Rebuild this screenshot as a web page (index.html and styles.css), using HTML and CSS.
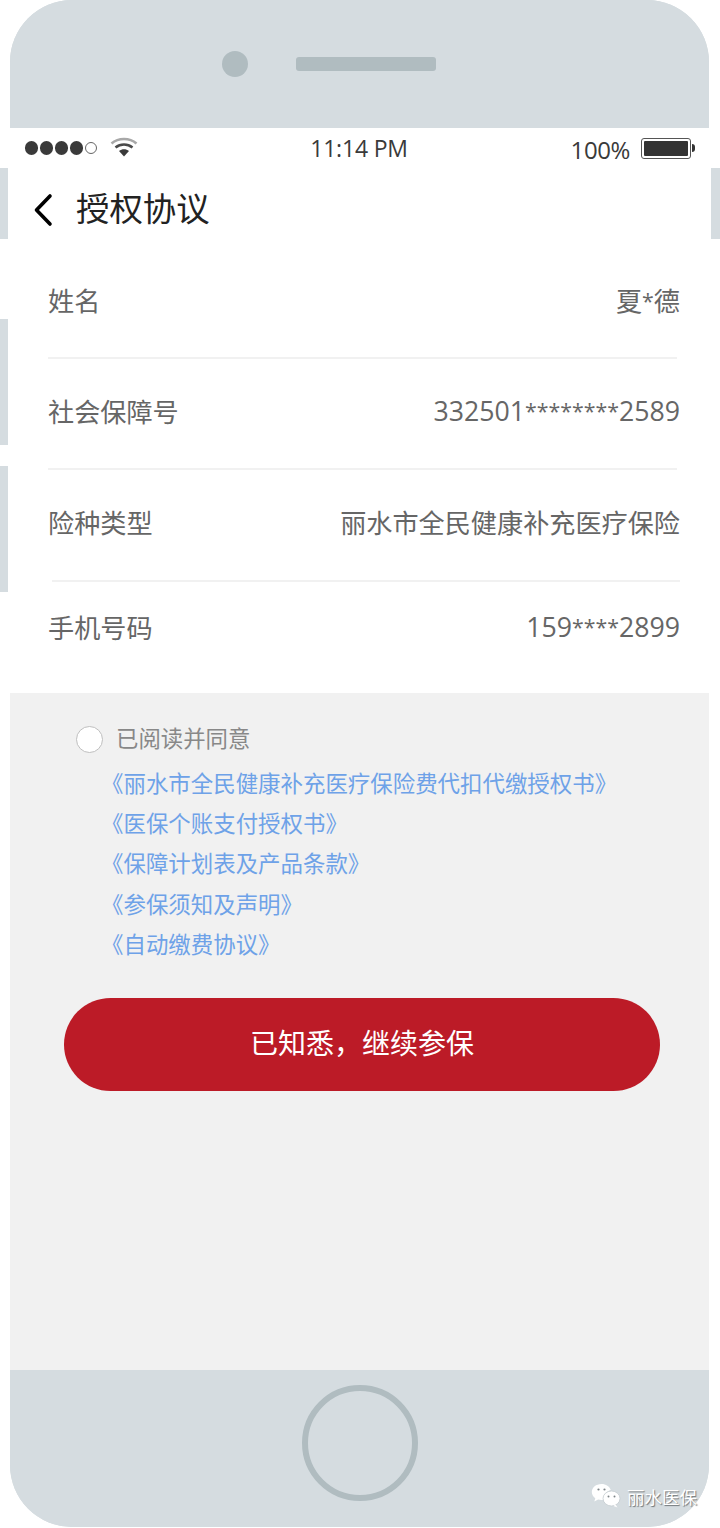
FILE: index.html
```html
<!DOCTYPE html>
<html lang="zh-CN">
<head>
<meta charset="utf-8">
<title>授权协议</title>
<link rel="stylesheet" href="styles.css">
</head>
<body>
<div class="stage">
  <span class="side side-l1"></span>
  <span class="side side-l2"></span>
  <span class="side side-l3"></span>
  <span class="side side-r1"></span>
  <div class="phone">
    <div class="bezel-top">
      <span class="camera"></span>
      <span class="speaker"></span>
    </div>
    <div class="screen">
      <div class="statusbar">
        <div class="status-left">
          <span class="dot"></span><span class="dot"></span><span class="dot"></span><span class="dot"></span><span class="dot dot-empty"></span>
          <svg class="wifi" width="28" height="20" viewBox="0 0 28 20"><path d="M1.5 6.5C8.5 0.5 19.5 0.5 26.5 6.5" fill="none" stroke="#a8a8a8" stroke-width="2.6"/><path d="M5.5 10.5C10.5 6.5 17.5 6.5 22.5 10.5" fill="none" stroke="#4a4a4a" stroke-width="2.6"/><path d="M9 14C12 11.5 16 11.5 19 14L14 19.5Z" fill="#3a3a3a"/></svg>
        </div>
        <div class="status-time">11:14 PM</div>
        <div class="status-right">
          <span class="percent">100%</span>
          <span class="battery"><span class="battery-fill"></span></span>
          <span class="battery-tip"></span>
        </div>
      </div>
      <div class="navbar">
        <svg class="back" width="22" height="34" viewBox="0 0 22 34"><path d="M18 3L4.500 17L18 31" fill="none" stroke="#000" stroke-width="3.600" stroke-linecap="round" stroke-linejoin="round"/></svg>
        <span class="nav-title">授权协议</span>
      </div>
      <div class="info">
        <div class="row row-1"><span>姓名</span><span>夏<span class="mask">*</span>德</span></div>
        <div class="row row-2"><span>社会保障号</span><span class="num">332501<span class="mask">********</span>2589</span></div>
        <div class="row row-3"><span>险种类型</span><span>丽水市全民健康补充医疗保险</span></div>
        <div class="row row-4"><span>手机号码</span><span class="num">159<span class="mask">****</span>2899</span></div>
      </div>
      <div class="agreement">
        <div class="agree-line">
          <span class="radio"></span>
          <span class="agree-text">已阅读并同意</span>
        </div>
        <ul class="links">
          <li>《丽水市全民健康补充医疗保险费代扣代缴授权书》</li>
          <li>《医保个账支付授权书》</li>
          <li>《保障计划表及产品条款》</li>
          <li>《参保须知及声明》</li>
          <li>《自动缴费协议》</li>
        </ul>
        <div class="cta">已知悉，继续参保</div>
      </div>
    </div>
    <div class="bezel-bottom">
      <span class="home"></span>
    </div>
  </div>
  <div class="watermark">
    <svg class="wechat" width="30" height="26" viewBox="0 0 30 26"><path d="M10.500 1C5 1 .8 4.600 .8 9c0 2.500 1.400 4.700 3.500 6.200L3.300 18.500l3.800-2c1.100.3 2.200.5 3.400.5.500 0 1 0 1.500-.1C14 8 20 7 19.800 7 18.500 3.500 15 1 10.500 1Z" fill="#fff"/><ellipse cx="20.500" cy="15.500" rx="8.500" ry="7.500" fill="#fff" stroke="#c4cbcf" stroke-width=".8"/><path d="M24.500 21.500l2 3-4-1.500Z" fill="#fff"/><circle cx="7.500" cy="6.500" r="1.100" fill="#7d8487"/><circle cx="13.500" cy="6.500" r="1.100" fill="#7d8487"/><circle cx="17.500" cy="13.500" r="1" fill="#7d8487"/><circle cx="23.500" cy="13.500" r="1" fill="#7d8487"/></svg>
    <span class="wm-text">丽水医保</span>
  </div>
</div>
</body>
</html>
```

FILE: styles.css
```css
* { box-sizing: border-box; }
html, body { margin: 0; padding: 0; background: #fff; }
body { font-family: "Open Sans", "Noto Sans CJK SC", sans-serif; }
.stage { position: relative; width: 720px; height: 1528px; overflow: hidden; }

.side { position: absolute; background: #d5dce0; width: 8px; }
.side-l1 { left: 0; top: 168px; height: 71px; }
.side-l2 { left: 0; top: 319px; height: 126px; }
.side-l3 { left: 0; top: 466px; height: 126px; }
.side-r1 { left: 711px; top: 168px; height: 71px; width: 9px; }

.phone {
  margin-left: 10px; width: 699px; height: 1527px;
  border-radius: 62px;
  background: #d5dce0; overflow: hidden;
  display: flex; flex-direction: column;
}
.bezel-top {
  height: 128px; flex: none; background: #d5dce0;
  display: flex; align-items: center; padding-left: 212px;
}
.camera { width: 26px; height: 26px; border-radius: 50%; background: #b0bcc0; }
.speaker { width: 140px; height: 14px; border-radius: 3px; background: #b0bcc0; margin-left: 48px; }

.screen { height: 1242px; flex: none; background: #fff; display: flex; flex-direction: column; }

.statusbar {
  height: 40px; flex: none; display: grid; grid-template-columns: 1fr auto 1fr; align-items: center;
  padding: 0 14px 0 15px; color: #3a3a3a;
}
.status-left { display: flex; align-items: center; gap: 1.600px; }
.dot { width: 13.400px; height: 13.400px; border-radius: 50%; background: #3a3a3a; }
.dot-empty { background: #fff; border: 1.300px solid #666; width: 12.500px; height: 12.500px; }
.wifi { margin-left: 11px; margin-top: -2px; }
.status-time { font-size: 23px; line-height: 40px; letter-spacing: -.2px; margin-left: -2px; }
.status-right { display: flex; align-items: center; justify-content: flex-end; font-size: 24px; }
.percent { letter-spacing: -.4px; margin-right: 11px; margin-top: 2px; }
.battery { width: 50px; height: 21px; border: 1.500px solid #555; border-radius: 3px; padding: 2px; display: flex; }
.battery-fill { flex: 1; background: #333; border-radius: 1px; }
.battery-tip { width: 3px; height: 8px; background: #333; border-radius: 0 3px 3px 0; margin-left: 1px; }

.navbar { height: 80px; flex: none; display: flex; align-items: center; padding-left: 22px; }
.back { flex: none; margin-top: 4px; }
.nav-title { font-size: 33.400px; color: #222; margin-left: 22px; line-height: 78px; font-weight: 400; }

.info { height: 445px; flex: none; padding: 0 29px 0 38px; color: #666; font-size: 26.150px; display: flex; flex-direction: column; }
.row { display: flex; justify-content: space-between; align-items: center; flex: none; border-bottom: 2px solid #f1f1f1; }
.row-1 { height: 111px; padding-bottom: 6px; margin-right: 3px; }
.row-1 > span:last-child { margin-right: -3px; }
.row-2 { height: 111px; padding-bottom: 6px; margin-right: 3px; }
.row-2 > span:last-child { margin-right: -3px; }
.row-3 { height: 112px; margin-left: 4px; padding-bottom: 6px; }
.row-3 > span:first-child { margin-left: -4px; }
.row-4 { height: 111px; padding-bottom: 22px; border-bottom: none; }
.num { font-size: 26.700px; }
.mask { font-size: 21.300px; line-height: 1; vertical-align: 2px; }

.agreement { flex: 1; background: #f1f1f1; padding: 31px 49px 0 54px; }
.agree-line { display: flex; align-items: center; height: 30px; padding-left: 12px; }
.radio { width: 27px; height: 27px; border-radius: 50%; background: #fff; border: 1.300px solid #bfbfbf; flex: none; }
.agree-text { font-size: 22.400px; color: #888; margin-left: 13px; line-height: 30px; }
.links { list-style: none; margin: 10px 0 0; padding: 0 0 0 38px; color: #6ea2e8; font-size: 22.450px; }
.links li { height: 40.200px; line-height: 40px; white-space: nowrap; margin-left: -1px; }
.cta {
  margin-top: 33px; width: 596px; height: 93px; border-radius: 47px;
  background: #bc1b27; color: #fff; font-size: 28px; padding-bottom: 4px;
  display: flex; align-items: center; justify-content: center;
}

.bezel-bottom { flex: 1; background: #d5dce0; display: flex; justify-content: center; padding-top: 15px; }
.home { width: 116px; height: 116px; border-radius: 50%; border: 6px solid #b0bcc0; }

.watermark { position: absolute; left: 591px; top: 1482px; display: flex; align-items: center; height: 28px; }
.wm-text { margin-left: 6px; font-size: 17.500px; color: #fff; text-shadow: 1px 1px 1px #6f7578; white-space: nowrap; }
```
